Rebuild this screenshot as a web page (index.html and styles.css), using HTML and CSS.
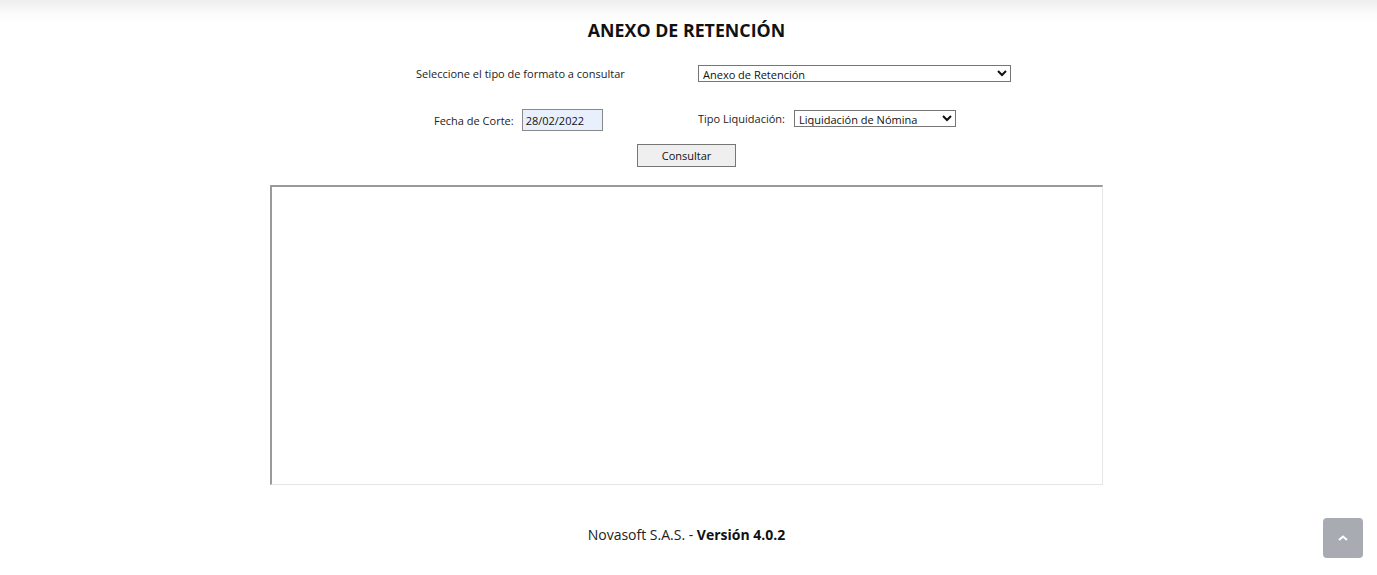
FILE: index.html
```html
<!DOCTYPE html>
<html lang="es">
<head>
    <meta charset="UTF-8">
    <title>Anexo de Retención</title>
    <link rel="stylesheet" href="styles.css">
</head>
<body>
    <div class="page">
        <h1 class="title">ANEXO DE RETENCIÓN</h1>

        <div class="form">
            <div class="row row-formato">
                <label class="lbl-formato" for="formato">Seleccione el tipo de formato a consultar</label>
                <select id="formato" class="sel-formato">
                    <option>Anexo de Retención</option>
                </select>
            </div>

            <div class="row row-filtros">
                <div class="cell cell-fecha">
                    <label for="fecha">Fecha de Corte:</label>
                    <input id="fecha" class="inp-fecha" type="text" value="28/02/2022">
                </div>
                <div class="cell cell-liq">
                    <label for="liq">Tipo Liquidación:</label>
                    <select id="liq" class="sel-liq">
                        <option>Liquidación de Nómina</option>
                    </select>
                </div>
            </div>

            <div class="row row-btn">
                <button class="btn">Consultar</button>
            </div>
        </div>

        <div class="visor"></div>

        <footer class="footer">Novasoft S.A.S. - <b>Versión 4.0.2</b></footer>
    </div>

    <a class="to-top" href="#">
        <svg width="10" height="6" viewBox="0 0 10 6"><path d="M1 5 L5 1.5 L9 5" fill="none" stroke="#fff" stroke-width="2"/></svg>
    </a>
</body>
</html>
```

FILE: styles.css
```css
html, body {
    margin: 0;
    height: 100%;
}

body {
    font-family: "Open Sans", "Noto Sans", sans-serif;
    color: #222;
    background: linear-gradient(#eeeeee 0, #fbfbfb 14px, #ffffff 24px);
}

.page {
    width: 833px;
    margin: 0 auto;
    padding-top: 18px;
    transform: translateX(-2px);
}

.title {
    margin: 0;
    text-align: center;
    font-size: 17.8px;
    font-weight: 700;
    line-height: 24px;
    color: #111;
}

.form {
    font-size: 11px;
    color: #222;
}

.row {
    display: flex;
    align-items: center;
}

.row-formato {
    margin-top: 23px;
    padding-left: 146px;
    height: 17px;
}

.lbl-formato {
    width: 282px;
}

select, input, button {
    font-family: inherit;
    font-size: 11px;
    color: #111;
}

.sel-formato {
    width: 313px;
    height: 17px;
    padding: 0;
    border: 1px solid #767676;
    border-radius: 0;
    background: #fff;
}

.row-filtros {
    margin-top: 27px;
    height: 22px;
    align-items: flex-start;
}

.cell {
    display: flex;
    align-items: center;
}

.cell-fecha {
    margin-left: 164px;
    width: 264px;
}

.cell-fecha label {
    margin-right: 8px;
}

.inp-fecha {
    width: 81px;
    height: 22px;
    box-sizing: border-box;
    padding: 0 3px;
    border: 1px solid #8a8a8a;
    background: #e8f0fe;
}

.cell-liq {
    margin-top: 1px;
}

.cell-liq label {
    margin-right: 9px;
}

.sel-liq {
    width: 162px;
    height: 17px;
    padding: 0;
    border: 1px solid #767676;
    border-radius: 0;
    background: #fff;
}

.row-btn {
    justify-content: center;
    margin-top: 13px;
}

.btn {
    width: 99px;
    height: 23px;
    border: 1px solid #767676;
    border-radius: 0;
    background: #efefef;
    cursor: pointer;
}

.visor {
    margin-top: 18px;
    height: 297px;
    border-style: solid;
    border-width: 2px 1px 1px 2px;
    border-color: #9a9a9a #e6e6e6 #e6e6e6 #9a9a9a;
}

.footer {
    margin-top: 40px;
    text-align: center;
    font-size: 14px;
    color: #222;
}

.footer b {
    color: #111;
}

.to-top {
    position: fixed;
    right: 14px;
    bottom: 17px;
    width: 40px;
    height: 40px;
    border-radius: 4px;
    background: #a9abb3;
    display: flex;
    align-items: center;
    justify-content: center;
}
```
